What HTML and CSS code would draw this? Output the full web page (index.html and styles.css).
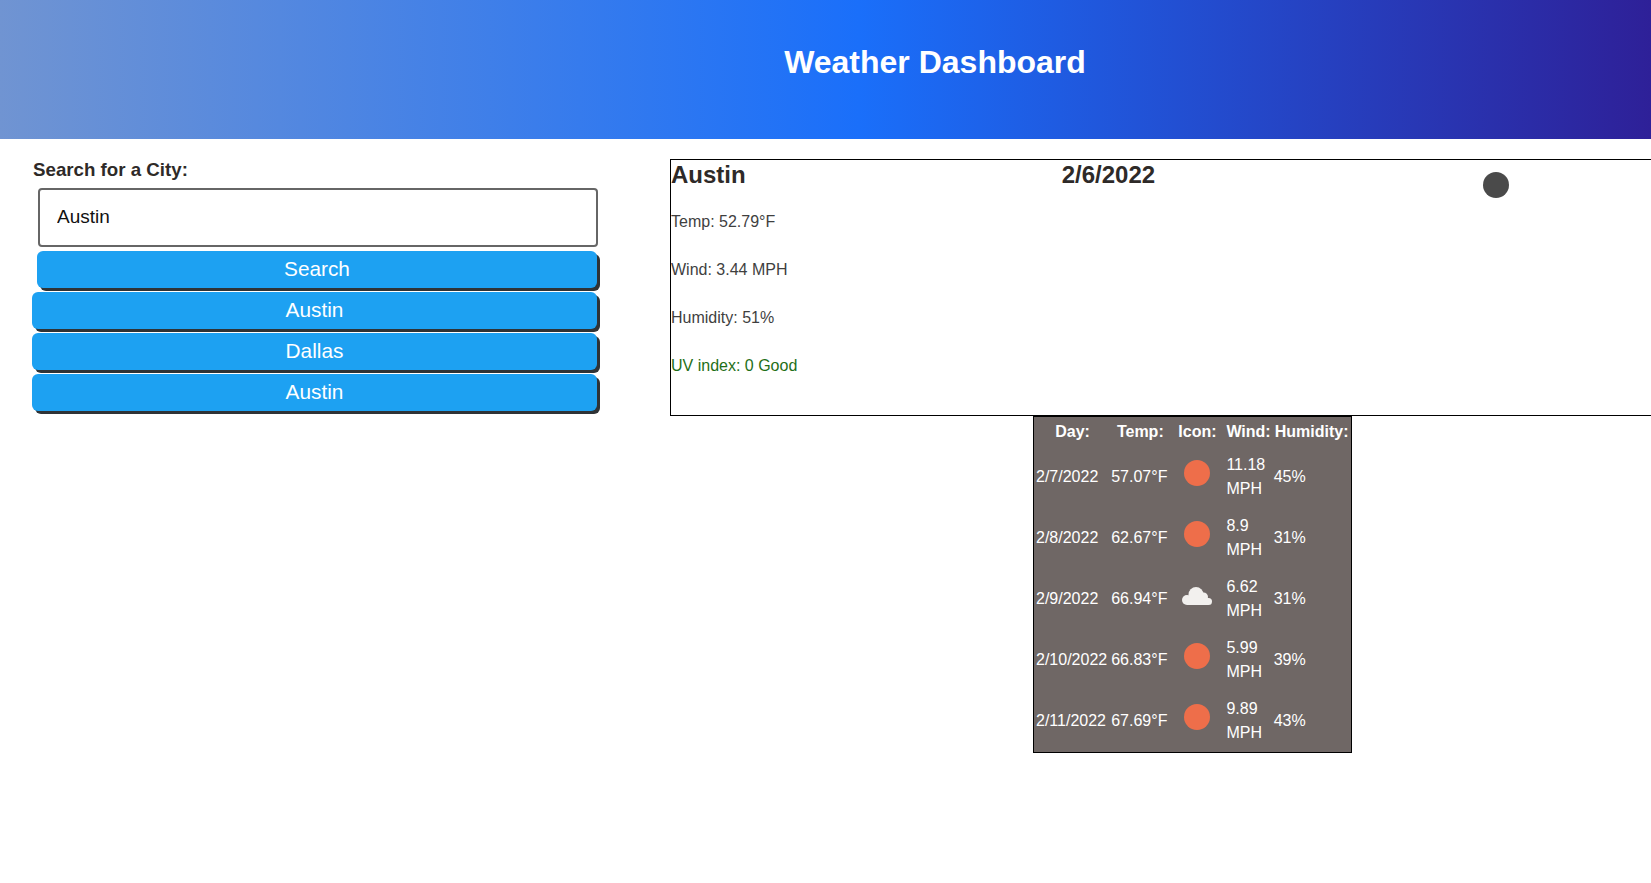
FILE: index.html
```html
<!DOCTYPE html>
<html lang="en">
<head>
    <meta charset="UTF-8">
    <meta name="viewport" content="width=device-width, initial-scale=1.0">
    <title>Weather Dashboard</title>
    <link rel="stylesheet" href="styles.css">
</head>
<body>
    <header class="page-header">
        <h1>Weather Dashboard</h1>
    </header>
    <main class="layout">
        <section class="search">
            <label class="search-label" for="city">Search for a City:</label>
            <input class="search-input" id="city" type="text" value="Austin">
            <button class="btn btn-search">Search</button>
            <button class="btn">Austin</button>
            <button class="btn">Dallas</button>
            <button class="btn">Austin</button>
        </section>
        <section class="results">
            <div class="today">
                <div class="today-head">
                    <h2>Austin</h2>
                    <h2>2/6/2022</h2>
                    <svg class="icon" viewBox="0 0 50 50"><circle cx="25" cy="25" r="13" fill="#4a4a4a"/></svg>
                </div>
                <p>Temp: 52.79°F</p>
                <p>Wind: 3.44 MPH</p>
                <p>Humidity: 51%</p>
                <p class="uv-good">UV index: 0 Good</p>
            </div>
            <table class="forecast">
                <tr>
                    <th>Day:</th><th>Temp:</th><th>Icon:</th><th>Wind:</th><th>Humidity:</th>
                </tr>
                <tr>
                    <td>2/7/2022</td><td>57.07°F</td>
                    <td class="icon-cell"><svg class="icon" viewBox="0 0 50 50"><circle cx="25" cy="25" r="13" fill="#ee6e4a"/></svg></td>
                    <td class="wind">11.18 MPH</td><td>45%</td>
                </tr>
                <tr>
                    <td>2/8/2022</td><td>62.67°F</td>
                    <td class="icon-cell"><svg class="icon" viewBox="0 0 50 50"><circle cx="25" cy="25" r="13" fill="#ee6e4a"/></svg></td>
                    <td class="wind">8.9 MPH</td><td>31%</td>
                </tr>
                <tr>
                    <td>2/9/2022</td><td>66.94°F</td>
                    <td class="icon-cell">
                        <svg class="icon" viewBox="0 0 50 50" fill="#f2f0ee">
                            <circle cx="24" cy="24.500" r="7.500"/>
                            <circle cx="15" cy="30" r="5"/>
                            <circle cx="31.500" cy="27" r="4.500"/>
                            <circle cx="36.500" cy="31.500" r="3.500"/>
                            <rect x="15" y="28" width="21.500" height="7"/>
                        </svg>
                    </td>
                    <td class="wind">6.62 MPH</td><td>31%</td>
                </tr>
                <tr>
                    <td>2/10/2022</td><td>66.83°F</td>
                    <td class="icon-cell"><svg class="icon" viewBox="0 0 50 50"><circle cx="25" cy="25" r="13" fill="#ee6e4a"/></svg></td>
                    <td class="wind">5.99 MPH</td><td>39%</td>
                </tr>
                <tr>
                    <td>2/11/2022</td><td>67.69°F</td>
                    <td class="icon-cell"><svg class="icon" viewBox="0 0 50 50"><circle cx="25" cy="25" r="13" fill="#ee6e4a"/></svg></td>
                    <td class="wind">9.89 MPH</td><td>43%</td>
                </tr>
            </table>
        </section>
    </main>
</body>
</html>
```

FILE: styles.css
```css
html, body {
    overflow-x: hidden;
}

body {
    margin: 0;
    font-family: "Liberation Sans", Arial, sans-serif;
    font-size: 16px;
    line-height: 1.5;
    color: #2e2a28;
    background: #ffffff;
}

.page-header {
    height: 139px;
    display: flex;
    align-items: center;
    justify-content: center;
    padding: 0 0 15px 219px;
    box-sizing: border-box;
    background: linear-gradient(90deg, #7094d2 0%, #1a6ffa 52%, #2e2098 100%);
}

.page-header h1 {
    margin: 0;
    font-size: 32px;
    color: #ffffff;
}

.layout {
    display: flex;
    align-items: flex-start;
    padding: 20px 0 0 32px;
}

.search {
    width: 567px;
    flex-shrink: 0;
    display: flex;
    flex-direction: column;
    align-items: flex-start;
}

.search-label {
    font-size: 18.72px;
    font-weight: bold;
    line-height: 21px;
    margin-bottom: 8px;
    margin-left: 1px;
}

.search-input {
    box-sizing: border-box;
    width: 560px;
    height: 59px;
    margin-left: 6px;
    padding: 0 17px 2px;
    border: 2px solid #666666;
    border-radius: 4px;
    font-family: inherit;
    font-size: 19px;
    color: #111111;
}

.btn {
    box-sizing: border-box;
    width: 565px;
    height: 37px;
    margin-bottom: 4px;
    padding: 0 0 2px;
    border: none;
    border-radius: 6px;
    background: #1da1f2;
    box-shadow: 3px 3px 0 #2f3336;
    color: #ffffff;
    font-family: inherit;
    font-size: 20.8px;
}

.btn-search {
    width: 560px;
    margin-left: 5px;
    margin-top: 4px;
}

.results {
    flex-shrink: 0;
    margin-left: 71px;
    width: 1000px;
}

.today {
    height: 257px;
    box-sizing: border-box;
    border: 1px solid #000000;
}

.today-head {
    display: flex;
    gap: 316px;
    height: 50px;
}

.today-head h2 {
    margin: 0;
    font-size: 24px;
    line-height: 29px;
}

.today p {
    margin: 0 0 24px;
    color: #3f3f3f;
}

.today .uv-good {
    color: #1f6f18;
}

.icon {
    width: 50px;
    height: 50px;
}

.forecast {
    width: 319px;
    margin-left: 363px;
    border: 1px solid #000000;
    background: #6f6765;
    color: #ffffff;
}

.forecast td {
    padding: 1px 2px 1px 0;
}

.forecast .icon-cell {
    padding: 1px;
}

.forecast .wind {
    width: 44px;
    padding: 1px 1px 1px 1px;
}
```
